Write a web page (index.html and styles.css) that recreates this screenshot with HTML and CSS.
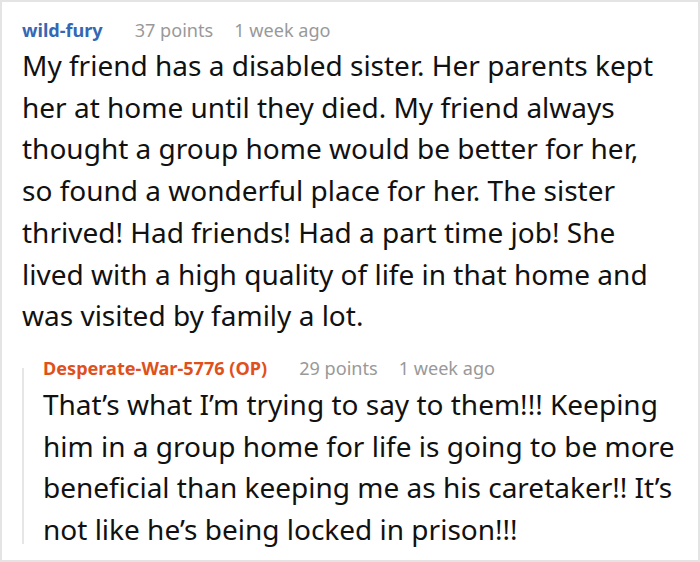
FILE: index.html
```html
<!DOCTYPE html>
<html>
<head>
<meta charset="utf-8">
<link rel="stylesheet" href="styles.css">
</head>
<body>
<div class="frame">
  <div class="comment">
    <div class="meta">
      <span class="author">wild-fury</span>
      <span class="info">37 points</span>
      <span class="info">1 week ago</span>
    </div>
    <p class="text">My friend has a disabled sister. Her parents kept her at home until they died. My friend always thought a group home would be better for her, so found a wonderful place for her. The sister thrived! Had friends! Had a part time job! She lived with a high quality of life in that home and was visited by family a lot.</p>
    <div class="reply">
      <div class="meta">
        <span class="author op">Desperate-War-5776 (OP)</span>
        <span class="info">29 points</span>
        <span class="info">1 week ago</span>
      </div>
      <p class="text">That’s what I’m trying to say to them!!! Keeping him in a group home for life is going to be more beneficial than keeping me as his caretaker!! It’s not like he’s being locked in prison!!!</p>
    </div>
  </div>
</div>
</body>
</html>
```
FILE: styles.css
```css
html, body {
  margin: 0;
  padding: 0;
  background: #fff;
}
.frame {
  width: 700px;
  height: 562px;
  box-sizing: border-box;
  border: 2px solid #e4e4e4;
  overflow: hidden;
  font-family: "Noto Sans", sans-serif;
}
.comment {
  padding: 16px 0 0 20px;
}
.meta {
  display: flex;
  align-items: baseline;
  gap: 21px;
  font-size: 18.1px;
  line-height: 24px;
  height: 24px;
}
.author {
  font-weight: 700;
  color: #3467b4;
  margin-right: 11px;
}
.author.op {
  color: #e0501c;
}
.info {
  color: #999;
}
.text {
  margin: 3px 0 0 0;
  font-size: 28px;
  line-height: 41.7px;
  color: #111;
  width: 640px;
}
.reply {
  display: flex;
  flex-direction: column;
  margin-top: 31px;
  border-left: 2px solid #e6e6e6;
  padding-left: 19px;
}
.reply .meta {
  margin-top: -12px;
}
.reply .text {
  width: 635px;
  margin-top: 4px;
  margin-bottom: -7px;
}
```
